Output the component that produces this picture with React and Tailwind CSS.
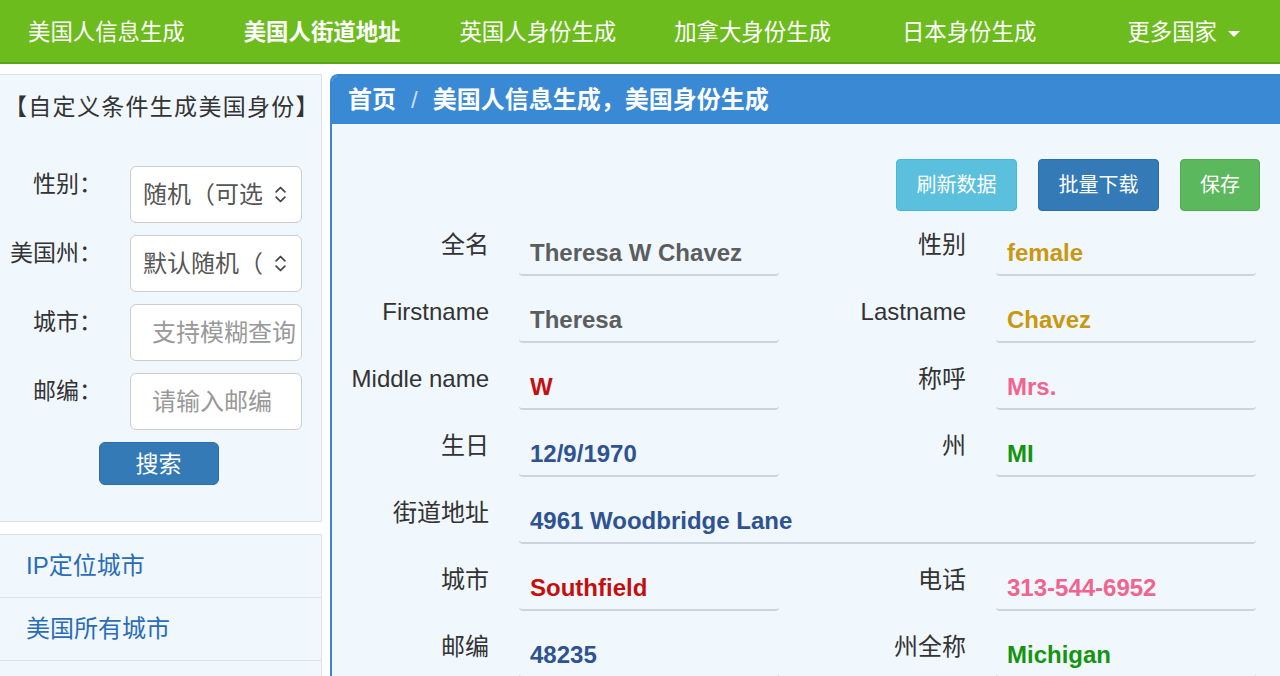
import { LuChevronsUpDown } from "react-icons/lu";

const font = { fontFamily: '"Liberation Sans", "Noto Sans CJK SC", sans-serif' };

const navItems = [
  { label: "美国人信息生成", ml: "ml-[28px]" },
  { label: "美国人街道地址", bold: true, ml: "ml-[59px]" },
  { label: "英国人身份生成", ml: "ml-[59px]" },
  { label: "加拿大身份生成", ml: "ml-[58px]" },
  { label: "日本身份生成", ml: "ml-[71px]" },
];

const rows = [
  { l: "全名", v: "Theresa W Chavez", c: "text-[#5b5d5f]", r: "性别", rv: "female", rc: "text-[#c9980e]" },
  { l: "Firstname", v: "Theresa", c: "text-[#5b5d5f]", r: "Lastname", rv: "Chavez", rc: "text-[#c9980e]" },
  { l: "Middle name", v: "W", c: "text-[#c40f0f]", r: "称呼", rv: "Mrs.", rc: "text-[#f0648e]" },
  { l: "生日", v: "12/9/1970", c: "text-[#2f5291]", r: "州", rv: "MI", rc: "text-[#15950f]" },
  { l: "街道地址", v: "4961 Woodbridge Lane", c: "text-[#2f5291]", full: true },
  { l: "城市", v: "Southfield", c: "text-[#c40f0f]", r: "电话", rv: "313-544-6952", rc: "text-[#f0648e]" },
  { l: "邮编", v: "48235", c: "text-[#2f5291]", r: "州全称", rv: "Michigan", rc: "text-[#15950f]" },
];

function Value({ text, color, wide }) {
  return (
    <div
      className={`${wide ? "w-[737px]" : "w-[260px]"} ml-[30px] h-[59px] pt-[23px] pl-[11px] border-b-2 border-[#cdd4dc] rounded-b-[4px] text-[24px] leading-[26px] font-bold whitespace-nowrap ${color}`}
    >
      {text}
    </div>
  );
}

function Label({ text, w }) {
  return <div className={`${w} shrink-0 text-right pt-[15px] text-[24px] leading-[26px] text-[#333] whitespace-nowrap`}>{text}</div>;
}

function SideField({ label, children }) {
  return (
    <div className="flex items-start">
      <div className="w-[102px] shrink-0 text-right pt-[5px] text-[23px] leading-[26px] text-[#333] whitespace-nowrap">{label}</div>
      <div className="ml-[28px] w-[172px] h-[57px] bg-white border border-[#ccc] rounded-[6px] flex items-center pl-[12px] pr-[10px] text-[24px] overflow-hidden whitespace-nowrap">
        {children}
      </div>
    </div>
  );
}

export default function App() {
  return (
    <div className="w-[1280px] h-[676px] overflow-hidden bg-white" style={font}>
      <nav className="h-[64px] bg-[#6cbc1e] border-b-2 border-[#5ea319] flex items-center text-white text-[22.4px] leading-[26px] pt-[3px]">
        {navItems.map((n) => (
          <span key={n.label} className={`${n.ml} ${n.bold ? "font-bold" : ""}`}>
            {n.label}
          </span>
        ))}
        <div className="ml-auto mr-[40px] flex items-center gap-[11px]">
          <span>更多国家</span>
          <span className="w-0 h-0 border-l-[6px] border-r-[6px] border-t-[6px] border-l-transparent border-r-transparent border-t-white mt-[2px]" />
        </div>
      </nav>

      <div className="flex mt-[10px]">
        <aside className="w-[322px] shrink-0">
          <div className="h-[448px] bg-[#f0f7fd] border border-l-0 border-[#dde3e8] pt-[19px]">
            <div className="pl-[4px] text-[23px] tracking-[1.3px] leading-[26px] text-[#333] whitespace-nowrap">【自定义条件生成美国身份】</div>
            <div className="mt-[46px] flex flex-col gap-[12px]">
              <SideField label="性别：">
                <span className="flex-1 text-[#555]">随机（可选</span>
                <LuChevronsUpDown className="text-[#444] text-[21px] shrink-0" />
              </SideField>
              <SideField label="美国州：">
                <span className="flex-1 text-[#555]">默认随机（</span>
                <LuChevronsUpDown className="text-[#444] text-[21px] shrink-0" />
              </SideField>
              <SideField label="城市：">
                <span className="text-[#999] pl-[9px]">支持模糊查询</span>
              </SideField>
              <SideField label="邮编：">
                <span className="text-[#999] pl-[9px]">请输入邮编</span>
              </SideField>
            </div>
            <div className="mt-[12px] flex justify-center pr-[4px]">
              <button className="w-[120px] h-[43px] bg-[#337ab7] border border-[#2e6da4] rounded-[6px] text-white text-[23px] leading-[26px]">
                搜索
              </button>
            </div>
          </div>
          <div className="mt-[12px] bg-[#f0f7fd] border border-l-0 border-[#dde3e8]">
            {["IP定位城市", "美国所有城市"].map((t) => (
              <div key={t} className="h-[63px] flex items-center pl-[26px] border-b border-[#dde3e8] text-[24px] text-[#2a6db6]">
                {t}
              </div>
            ))}
            <div className="h-[63px]" />
          </div>
        </aside>

        <main className="ml-[8px] flex-1 border-l-2 border-t-2 border-[#3a87cf] rounded-tl-[8px] bg-[#f0f7fd] h-[620px]">
          <div className="h-[48px] bg-[#3a89d4] rounded-tl-[6px] flex items-center pl-[16px] text-white font-bold text-[24px]">
            <span>首页</span>
            <span className="mx-[15px] font-normal text-[#c8dcf0]">/</span>
            <span>美国人信息生成，美国身份生成</span>
          </div>
          <div className="flex justify-end gap-[21px] pr-[20px] mt-[35px]">
            <button className="w-[121px] h-[52px] bg-[#5bc0de] border border-[#46b8da] rounded-[4px] text-white text-[20px]">刷新数据</button>
            <button className="w-[121px] h-[52px] bg-[#337ab7] border border-[#2e6da4] rounded-[4px] text-white text-[20px]">批量下载</button>
            <button className="w-[80px] h-[52px] bg-[#5cb85c] border border-[#4cae4c] rounded-[4px] text-white text-[20px]">保存</button>
          </div>
          <div className="mt-[6px] flex flex-col">
            {rows.map((r) => (
              <div key={r.l} className="flex items-start h-[67px]">
                <Label text={r.l} w="w-[157px]" />
                {r.full ? (
                  <Value text={r.v} color={r.c} wide />
                ) : (
                  <>
                    <Value text={r.v} color={r.c} />
                    <Label text={r.r} w="w-[187px]" />
                    <Value text={r.rv} color={r.rc} />
                  </>
                )}
              </div>
            ))}
          </div>
        </main>
      </div>
    </div>
  );
}
